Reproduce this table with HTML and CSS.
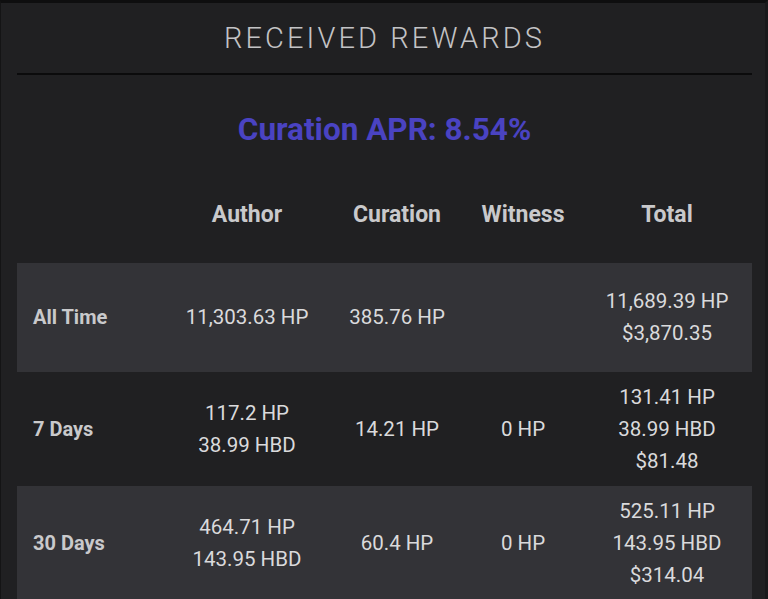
FILE: index.html
```html
<!DOCTYPE html>
<html lang="en">
<head>
<meta charset="utf-8">
<title>Received Rewards</title>
<link rel="stylesheet" href="styles.css">
</head>
<body>
<section class="panel">
  <h1 class="title">RECEIVED REWARDS</h1>
  <div class="apr">Curation APR: 8.54%</div>
  <table class="rewards">
    <colgroup>
      <col class="c-label">
      <col class="c-author">
      <col class="c-curation">
      <col class="c-witness">
      <col class="c-total">
    </colgroup>
    <thead>
      <tr>
        <th></th>
        <th>Author</th>
        <th>Curation</th>
        <th>Witness</th>
        <th>Total</th>
      </tr>
    </thead>
    <tbody>
      <tr class="shaded tall">
        <th class="label">All Time</th>
        <td>11,303.63 HP</td>
        <td>385.76 HP</td>
        <td></td>
        <td>11,689.39 HP<br>$3,870.35</td>
      </tr>
      <tr>
        <th class="label">7 Days</th>
        <td>117.2 HP<br>38.99 HBD</td>
        <td>14.21 HP</td>
        <td>0 HP</td>
        <td>131.41 HP<br>38.99 HBD<br>$81.48</td>
      </tr>
      <tr class="shaded">
        <th class="label">30 Days</th>
        <td>464.71 HP<br>143.95 HBD</td>
        <td>60.4 HP</td>
        <td>0 HP</td>
        <td>525.11 HP<br>143.95 HBD<br>$314.04</td>
      </tr>
    </tbody>
  </table>
</section>
</body>
</html>
```
FILE: styles.css
```css
html, body {
  margin: 0;
  padding: 0;
  background: #1a1a1c;
}
body {
  font-family: Roboto, "Liberation Sans", sans-serif;
  height: 599px;
  overflow: hidden;
}
.panel {
  background: #202022;
  border-top: 3px solid #0e0e0f;
  border-left: 1px solid #141415;
  border-right: 3px solid #19191b;
  padding: 0 13px 0 16px;
  min-height: 700px;
}
.title {
  margin: 0;
  height: 70px;
  line-height: 70px;
  text-align: center;
  font-weight: 300;
  font-size: 29px;
  letter-spacing: 3.1px;
  color: #c3c3c5;
  border-bottom: 2px solid #0b0b0c;
}
.apr {
  margin: 35px 0 0;
  line-height: 40px;
  text-align: center;
  font-size: 31.5px;
  font-weight: 700;
  color: #4a43c2;
}
.rewards {
  width: 735px;
  border-collapse: collapse;
  table-layout: fixed;
  font-size: 20.5px;
  line-height: 32px;
  color: #dadadc;
}
.c-label { width: 147px; }
.c-author { width: 166px; }
.c-curation { width: 134px; }
.c-witness { width: 118px; }
.c-total { width: 170px; }
.rewards thead th {
  padding: 51px 0 34px;
  line-height: 28px;
  font-size: 23px;
  font-weight: 700;
  color: #c9c9cb;
  text-align: center;
}
.rewards tbody td,
.rewards tbody th {
  padding: 9px 0;
  text-align: center;
  vertical-align: middle;
  font-weight: 400;
}
.rewards tbody .label {
  text-align: left;
  padding-left: 16px;
  font-size: 20px;
  font-weight: 700;
  color: #c9c9cb;
}
.rewards tr.tall td,
.rewards tr.tall th {
  padding-top: 22px;
  padding-bottom: 23px;
}
.rewards tr.shaded {
  background: #333337;
}
```
